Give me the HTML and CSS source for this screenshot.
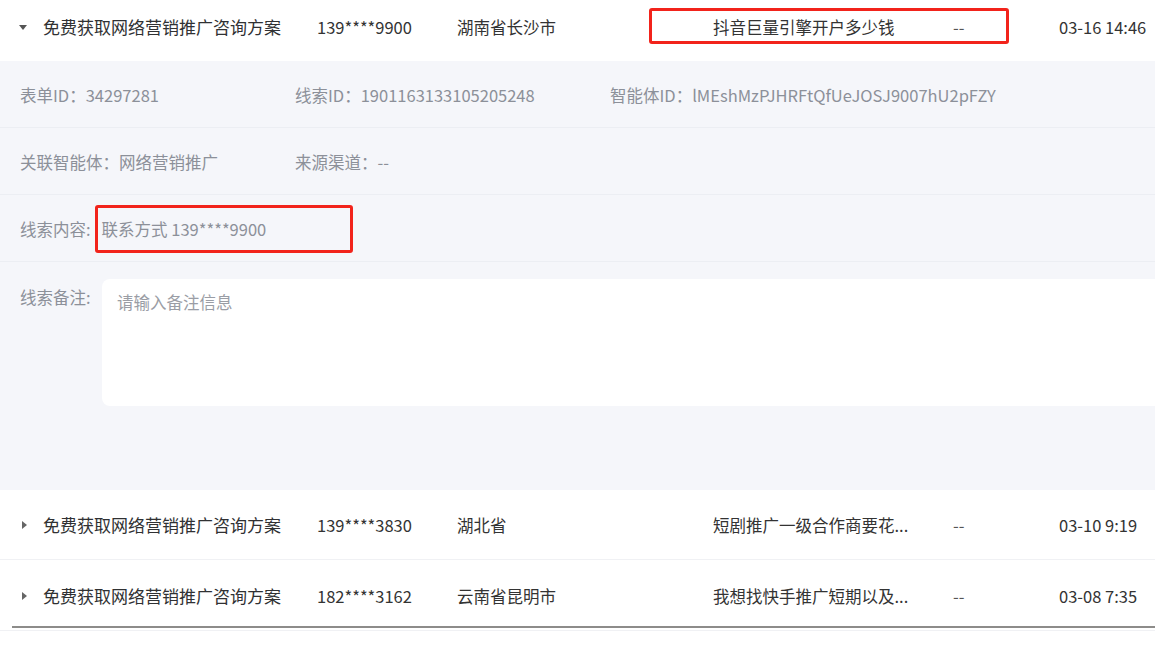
FILE: index.html
```html
<!DOCTYPE html>
<html lang="zh-CN">
<head>
<meta charset="utf-8">
<title>线索列表</title>
<link rel="stylesheet" href="styles.css">
</head>
<body>
<div class="table">
  <div class="row row-open">
    <div class="cell c-caret"><span class="caret caret-down"></span></div>
    <div class="cell c-title">免费获取网络营销推广咨询方案</div>
    <div class="cell c-phone">139****9900</div>
    <div class="cell c-region">湖南省长沙市</div>
    <div class="cell c-kw">抖音巨量引擎开户多少钱</div>
    <div class="cell c-remark">--</div>
    <div class="cell c-date">03-16 14:46</div>
    <div class="mark mark-1"></div>
  </div>

  <div class="detail">
    <div class="d-row d-grid">
      <div class="d-item">表单ID：34297281</div>
      <div class="d-item">线索ID：1901163133105205248</div>
      <div class="d-item">智能体ID：lMEshMzPJHRFtQfUeJOSJ9007hU2pFZY</div>
    </div>
    <div class="d-row d-grid">
      <div class="d-item">关联智能体：网络营销推广</div>
      <div class="d-item">来源渠道：--</div>
    </div>
    <div class="d-row d-content">
      <span class="d-label">线索内容:</span>
      <span class="d-value">联系方式 139****9900</span>
      <div class="mark mark-2"></div>
    </div>
    <div class="d-note">
      <span class="d-label note-label">线索备注:</span>
      <div class="note-box"><span class="placeholder">请输入备注信息</span></div>
    </div>
  </div>

  <div class="row">
    <div class="cell c-caret"><span class="caret caret-right"></span></div>
    <div class="cell c-title">免费获取网络营销推广咨询方案</div>
    <div class="cell c-phone">139****3830</div>
    <div class="cell c-region">湖北省</div>
    <div class="cell c-kw">短剧推广一级合作商要花...</div>
    <div class="cell c-remark">--</div>
    <div class="cell c-date">03-10 9:19</div>
  </div>

  <div class="row row-last">
    <div class="cell c-caret"><span class="caret caret-right"></span></div>
    <div class="cell c-title">免费获取网络营销推广咨询方案</div>
    <div class="cell c-phone">182****3162</div>
    <div class="cell c-region">云南省昆明市</div>
    <div class="cell c-kw">我想找快手推广短期以及...</div>
    <div class="cell c-remark">--</div>
    <div class="cell c-date">03-08 7:35</div>
  </div>
  <div class="scroll-line"></div>
  <div class="foot-line"></div>
</div>
</body>
</html>
```
FILE: styles.css
```css
* { box-sizing: border-box; }
html, body {
  margin: 0;
  padding: 0;
  background: #ffffff;
  font-family: "Noto Sans CJK SC", "Noto Sans", sans-serif;
  color: #333;
}
.table {
  width: 1155px;
  overflow: hidden;
}
.row {
  position: relative;
  display: flex;
  align-items: center;
  height: 70px;
  background: #fff;
  border-bottom: 1px solid #f0f1f4;
  font-size: 16.5px;
  color: #333;
}
.row-open {
  height: 61px;
  border-bottom: none;
  padding-bottom: 8px;
}
.row-last {
  height: 66px;
  border-bottom: none;
  padding-top: 5px;
}
.cell {
  white-space: nowrap;
  line-height: 24px;
  flex: none;
}
.c-caret { width: 43px; display: flex; justify-content: flex-start; padding-left: 19px; }
.c-title { width: 274px; font-size: 17px; color: #303133; }
.c-phone { width: 140px; }
.c-region { width: 256px; }
.c-kw { width: 240px; }
.c-remark { width: 106px; color: #555; }
.c-date { width: 96px; }

.caret { display: block; width: 0; height: 0; }
.caret-down {
  border-left: 4.5px solid transparent;
  border-right: 4.5px solid transparent;
  border-top: 5px solid #555;
  margin-top: 2px;
}
.caret-right {
  border-top: 4.5px solid transparent;
  border-bottom: 4.5px solid transparent;
  border-left: 5px solid #666;
  margin-left: 3px;
}

.mark {
  position: absolute;
  border: 3px solid #f2231b;
  border-radius: 3px;
  pointer-events: none;
}
.mark-1 { left: 649px; top: 8px; width: 360px; height: 36px; }
.mark-2 { left: 95px; top: 10px; width: 258px; height: 48px; }

.detail {
  background: #f5f6fa;
  height: 429px;
  font-size: 16.5px;
  color: #8c9099;
}
.d-row {
  position: relative;
  height: 67px;
  border-bottom: 1px solid #eceef3;
  padding-left: 20px;
  align-items: center;
}
.d-grid {
  display: grid;
  grid-template-columns: 275px 315px 1fr;
  padding-top: 2px;
}
.d-item { white-space: nowrap; }
.d-content {
  display: flex;
  padding-top: 2px;
}
.d-label { white-space: nowrap; }
.d-value { margin-left: 11px; color: #8c9099; }
.d-note {
  display: flex;
  align-items: flex-start;
  padding: 17px 0 0 20px;
}
.note-label { margin-top: 6px; width: 82px; flex: none; }
.note-box {
  flex: 1;
  height: 127px;
  background: #fff;
  border-radius: 8px 0 0 8px;
  padding: 11px 0 0 15px;
}
.placeholder { color: #9a9da5; font-size: 16.5px; }
.scroll-line {
  margin-left: 12px;
  height: 2px;
  background: #8d8c8a;
}
.foot-line {
  margin-top: 2px;
  height: 1px;
  background: #f0f1f4;
}
```
